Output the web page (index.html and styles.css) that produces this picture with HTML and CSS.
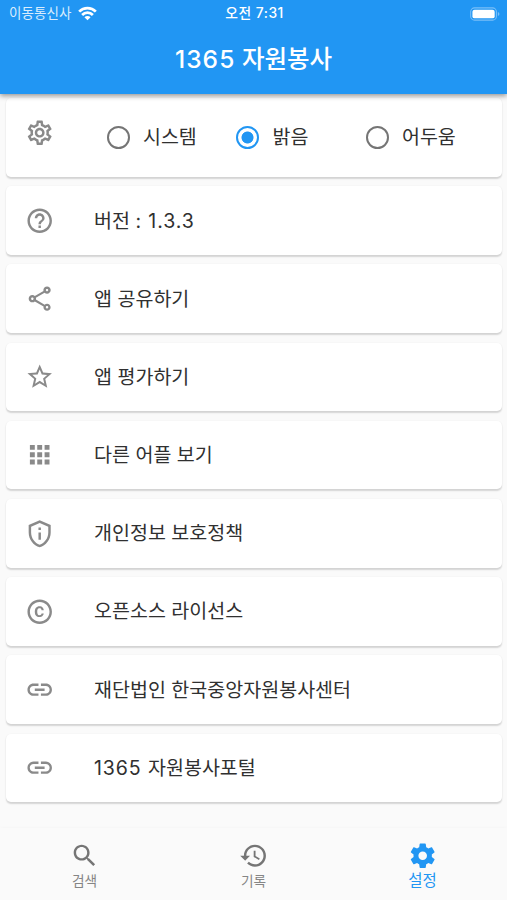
FILE: index.html
```html
<!DOCTYPE html>
<html lang="ko">
<head>
<meta charset="utf-8">
<title>1365 자원봉사</title>
<link rel="stylesheet" href="styles.css">
</head>
<body>
<div class="app">
  <header class="header">
    <div class="status">
      <div class="carrier"><span>이동통신사</span>
        <svg class="wifi" viewBox="0 0 18 14"><path d="M9 13.4 6.1 10.5a4 4 0 0 1 5.8 0z"/><path class="arc" d="M3.9 8.4a7.2 7.2 0 0 1 10.2 0M1.1 5.2a11.2 11.2 0 0 1 15.8 0"/></svg>
      </div>
      <div class="clock">오전 7:31</div>
      <div class="power"><svg class="battery" viewBox="0 0 31 14"><rect class="shell" x=".7" y=".7" width="26.6" height="12.6" rx="4"/><rect x="2.5" y="2.5" width="23" height="9" rx="2.3"/><path class="tip" d="M28.8 5v4q1.6-.6 1.6-2t-1.6-2z"/></svg></div>
    </div>
    <h1 class="title"><span class="num">1365</span> 자원봉사</h1>
  </header>
  <main class="list">
    <section class="card theme">
      <svg class="icon" viewBox="0 0 24 24"><path d="M19.43 12.98c.04-.32.07-.64.07-.98s-.03-.66-.07-.98l2.11-1.65c.19-.15.24-.42.12-.64l-2-3.46c-.09-.16-.26-.25-.44-.25-.06 0-.12.01-.17.03l-2.49 1c-.52-.4-1.08-.73-1.69-.98l-.38-2.65C14.46 2.18 14.25 2 14 2h-4c-.25 0-.46.18-.49.42l-.38 2.65c-.61.25-1.17.59-1.69.98l-2.49-1c-.06-.02-.12-.03-.18-.03-.17 0-.34.09-.43.25l-2 3.46c-.13.22-.07.49.12.64l2.11 1.65c-.04.32-.07.65-.07.98s.03.66.07.98l-2.11 1.65c-.19.15-.24.42-.12.64l2 3.46c.09.16.26.25.44.25.06 0 .12-.01.17-.03l2.49-1c.52.4 1.08.73 1.69.98l.38 2.65c.03.24.24.42.49.42h4c.25 0 .46-.18.49-.42l.38-2.65c.61-.25 1.17-.59 1.69-.98l2.49 1c.06.02.12.03.18.03.17 0 .34-.09.43-.25l2-3.46c.12-.22.07-.49-.12-.64l-2.11-1.65zm-1.98-1.71c.04.31.05.52.05.73s-.02.43-.05.73l-.14 1.13.89.7 1.08.84-.7 1.21-1.27-.51-1.04-.42-.9.68c-.43.32-.84.56-1.25.73l-1.06.43-.16 1.13-.2 1.35h-1.4l-.19-1.35-.16-1.13-1.06-.43c-.43-.18-.83-.41-1.23-.71l-.91-.7-1.06.43-1.27.51-.7-1.21 1.08-.84.89-.7-.14-1.13c-.03-.31-.05-.54-.05-.74s.02-.43.05-.73l.14-1.13-.89-.7-1.08-.84.7-1.21 1.27.51 1.04.42.9-.68c.43-.32.84-.56 1.25-.73l1.06-.43.16-1.13.2-1.35h1.39l.19 1.35.16 1.13 1.06.43c.43.18.83.41 1.23.71l.91.7 1.06-.43 1.27-.51.7 1.21-1.07.85-.89.7.14 1.13zM12 8c-2.21 0-4 1.79-4 4s1.79 4 4 4 4-1.79 4-4-1.79-4-4-4zm0 6c-1.1 0-2-.9-2-2s.9-2 2-2 2 .9 2 2-.9 2-2 2z"/></svg>
      <div class="options">
        <div class="option"><span class="radio"></span><span>시스템</span></div>
        <div class="option"><span class="radio on"></span><span>밝음</span></div>
        <div class="option"><span class="radio"></span><span>어두움</span></div>
      </div>
    </section>
    <section class="card">
      <svg class="icon" viewBox="0 0 24 24"><path d="M11 18h2v-2h-2v2zm1-16C6.48 2 2 6.48 2 12s4.48 10 10 10 10-4.48 10-10S17.52 2 12 2zm0 18c-4.41 0-8-3.59-8-8s3.59-8 8-8 8 3.59 8 8-3.59 8-8 8zm0-14c-2.21 0-4 1.79-4 4h2c0-1.1.9-2 2-2s2 .9 2 2c0 2-3 1.75-3 5h2c0-2.25 3-2.5 3-5 0-2.21-1.79-4-4-4z"/></svg>
      <span class="label">버전 <span class="num">: 1.3.3</span></span>
    </section>
    <section class="card">
      <svg class="icon" viewBox="0 0 24 24"><path d="M18 16.08c-.76 0-1.44.3-1.96.77L8.91 12.7c.05-.23.09-.46.09-.7s-.04-.47-.09-.7l7.05-4.11c.54.5 1.25.81 2.04.81 1.66 0 3-1.34 3-3s-1.34-3-3-3-3 1.34-3 3c0 .24.04.47.09.7L8.04 9.81C7.5 9.31 6.79 9 6 9c-1.66 0-3 1.34-3 3s1.34 3 3 3c.79 0 1.5-.31 2.04-.81l7.12 4.16c-.05.21-.08.43-.08.65 0 1.61 1.31 2.92 2.92 2.92s2.92-1.31 2.92-2.92-1.31-2.92-2.92-2.92zM18 4c.55 0 1 .45 1 1s-.45 1-1 1-1-.45-1-1 .45-1 1-1zM6 13c-.55 0-1-.45-1-1s.45-1 1-1 1 .45 1 1-.45 1-1 1zm12 7.02c-.55 0-1-.45-1-1s.45-1 1-1 1 .45 1 1-.45 1-1 1z"/></svg>
      <span class="label">앱 공유하기</span>
    </section>
    <section class="card">
      <svg class="icon" viewBox="0 0 24 24"><path d="M22 9.24l-7.19-.62L12 2 9.19 8.63 2 9.24l5.46 4.73L5.82 21 12 17.27 18.18 21l-1.63-7.03L22 9.24zM12 15.4l-3.76 2.27 1-4.28-3.32-2.88 4.38-.38L12 6.1l1.71 4.04 4.38.38-3.32 2.88 1 4.28L12 15.4z"/></svg>
      <span class="label">앱 평가하기</span>
    </section>
    <section class="card">
      <svg class="icon" viewBox="0 0 24 24"><path d="M4 8h4V4H4v4zm6 12h4v-4h-4v4zm-6 0h4v-4H4v4zm0-6h4v-4H4v4zm6 0h4v-4h-4v4zm6-10v4h4V4h-4zm-6 4h4V4h-4v4zm6 6h4v-4h-4v4zm0 6h4v-4h-4v4z"/></svg>
      <span class="label">다른 어플 보기</span>
    </section>
    <section class="card">
      <svg class="icon" viewBox="0 0 24 24"><path d="M12 1L3 5v6c0 5.55 3.84 10.74 9 12 5.16-1.26 9-6.45 9-12V5l-9-4zm7 10c0 4.52-2.98 8.69-7 9.93-4.02-1.24-7-5.41-7-9.93V6.3l7-3.11 7 3.11V11zm-8 0h2v6h-2v-6zm0-4h2v2h-2V7z"/></svg>
      <span class="label">개인정보 보호정책</span>
    </section>
    <section class="card">
      <svg class="icon" viewBox="0 0 24 24"><path d="M10.08 10.86c.05-.33.16-.62.3-.87s.34-.46.59-.62c.24-.15.54-.22.91-.23.23.01.44.05.63.13.2.09.38.21.52.36s.25.33.34.53.13.42.14.64h1.79c-.02-.47-.11-.9-.28-1.29s-.4-.73-.7-1.01-.66-.5-1.08-.66-.88-.23-1.39-.23c-.65 0-1.22.11-1.7.34s-.88.53-1.2.92-.56.84-.71 1.36S8 11.29 8 11.87v.27c0 .58.08 1.12.23 1.64s.39.97.71 1.35.72.69 1.2.91c.48.22 1.05.34 1.7.34.47 0 .91-.08 1.32-.23s.77-.36 1.08-.63.56-.58.74-.94.29-.74.3-1.15h-1.79c-.01.21-.06.4-.15.58s-.21.33-.36.46-.32.23-.52.3c-.19.07-.39.09-.6.1-.36-.01-.66-.08-.89-.23-.25-.16-.45-.37-.59-.62s-.25-.55-.3-.88-.08-.67-.08-1v-.27c0-.35.03-.68.08-1.01zM12 2C6.48 2 2 6.48 2 12s4.48 10 10 10 10-4.48 10-10S17.52 2 12 2zm0 18c-4.41 0-8-3.59-8-8s3.59-8 8-8 8 3.59 8 8-3.59 8-8 8z"/></svg>
      <span class="label">오픈소스 라이선스</span>
    </section>
    <section class="card">
      <svg class="icon" viewBox="0 0 24 24"><path d="M3.9 12c0-1.71 1.39-3.1 3.1-3.1h4V7H7c-2.76 0-5 2.24-5 5s2.24 5 5 5h4v-1.9H7c-1.71 0-3.1-1.39-3.1-3.1zM8 13h8v-2H8v2zm9-6h-4v1.9h4c1.71 0 3.1 1.39 3.1 3.1s-1.39 3.1-3.1 3.1h-4V17h4c2.76 0 5-2.24 5-5s-2.24-5-5-5z"/></svg>
      <span class="label">재단법인 한국중앙자원봉사센터</span>
    </section>
    <section class="card">
      <svg class="icon" viewBox="0 0 24 24"><path d="M3.9 12c0-1.71 1.39-3.1 3.1-3.1h4V7H7c-2.76 0-5 2.24-5 5s2.24 5 5 5h4v-1.9H7c-1.71 0-3.1-1.39-3.1-3.1zM8 13h8v-2H8v2zm9-6h-4v1.9h4c1.71 0 3.1 1.39 3.1 3.1s-1.39 3.1-3.1 3.1h-4V17h4c2.76 0 5-2.24 5-5s-2.24-5-5-5z"/></svg>
      <span class="label"><span class="num">1365 </span>자원봉사포털</span>
    </section>
  </main>
  <nav class="tabs">
    <div class="tab">
      <svg class="icon" viewBox="0 0 24 24"><path d="M15.5 14h-.79l-.28-.27C15.41 12.59 16 11.11 16 9.5 16 5.91 13.09 3 9.5 3S3 5.91 3 9.5 5.91 16 9.5 16c1.61 0 3.09-.59 4.23-1.57l.27.28v.79l5 4.99L20.49 19l-4.99-5zm-6 0C7.01 14 5 11.99 5 9.5S7.01 5 9.5 5 14 7.01 14 9.5 11.99 14 9.5 14z"/></svg>
      <span>검색</span>
    </div>
    <div class="tab">
      <svg class="icon" viewBox="0 0 24 24"><path d="M13 3c-4.97 0-9 4.03-9 9H1l3.89 3.89.07.14L9 12H6c0-3.87 3.13-7 7-7s7 3.13 7 7-3.13 7-7 7c-1.93 0-3.68-.79-4.94-2.06l-1.42 1.42C8.27 19.99 10.51 21 13 21c4.97 0 9-4.03 9-9s-4.03-9-9-9zm-1 5v5l4.28 2.54.72-1.21-3.5-2.08V8H12z"/></svg>
      <span>기록</span>
    </div>
    <div class="tab active">
      <svg class="icon" viewBox="0 0 24 24"><path d="M19.43 12.98c.04-.32.07-.64.07-.98s-.03-.66-.07-.98l2.11-1.65c.19-.15.24-.42.12-.64l-2-3.46c-.12-.22-.39-.3-.61-.22l-2.49 1c-.52-.4-1.08-.73-1.69-.98l-.38-2.65C14.46 2.18 14.25 2 14 2h-4c-.25 0-.46.18-.49.42l-.38 2.65c-.61.25-1.17.59-1.69.98l-2.49-1c-.23-.09-.49 0-.61.22l-2 3.46c-.13.22-.07.49.12.64l2.11 1.65c-.04.32-.07.65-.07.98s.03.66.07.98l-2.11 1.65c-.19.15-.24.42-.12.64l2 3.46c.12.22.39.3.61.22l2.49-1c.52.4 1.08.73 1.69.98l.38 2.65c.03.24.24.42.49.42h4c.25 0 .46-.18.49-.42l.38-2.65c.61-.25 1.17-.59 1.69-.98l2.49 1c.23.09.49 0 .61-.22l2-3.46c.12-.22.07-.49-.12-.64l-2.11-1.65zM12 15.5c-1.93 0-3.5-1.57-3.5-3.5s1.57-3.5 3.5-3.5 3.5 1.57 3.5 3.5-1.57 3.5-3.5 3.5z"/></svg>
      <span>설정</span>
    </div>
  </nav>
</div>
</body>
</html>
```
FILE: styles.css
```css
* { box-sizing: border-box; }
body { margin: 0; font-family: Inter, "Noto Sans CJK KR", sans-serif; color: #303030; }
.app { width: 507px; height: 900px; display: flex; flex-direction: column; background: #fafafa; overflow: hidden; }
.header { height: 93.5px; flex: none; background: #2196f3; color: #fff; box-shadow: 0 2px 5px rgba(0,0,0,.4); position: relative; z-index: 1; }
.status { height: 27px; display: grid; grid-template-columns: 1fr auto 1fr; align-items: center; padding: 0 7px 0 9px; font-size: 13.5px; line-height: 27px; }
.carrier { display: flex; align-items: center; gap: 6px; color: #d9edfd; letter-spacing: .1px; }
.wifi { width: 19px; height: 15px; fill: #fff; }
.wifi .arc { fill: none; stroke: #fff; stroke-width: 2.6; }
.clock { font-weight: 500; font-size: 13.8px; letter-spacing: .5px; }
.power { display: flex; justify-content: flex-end; }
.battery { width: 30px; height: 14px; fill: #fff; }
.battery .shell { fill: none; stroke: #7abff8; stroke-width: 1.1; }
.battery .tip { fill: #7abff8; }
.title { margin: 0; height: 64px; line-height: 64px; text-align: center; font-size: 24.5px; font-weight: 500; }
.num { letter-spacing: .9px; }
.title .num { letter-spacing: 1.1px; }
.list { flex: 1; display: flex; flex-direction: column; gap: 9.7px; padding: 4.9px 5px 0 6px; }
.card { height: 68.5px; flex: none; display: flex; align-items: center; padding-left: 19.3px; background: #fff; border-radius: 5px; box-shadow: 0 1.5px 1.5px rgba(0,0,0,.15), 0 0 2px rgba(0,0,0,.03); }
.icon { width: 29.4px; height: 29.4px; flex: none; fill: #8a8a8a; }
.label { margin-left: 39.3px; font-size: 19.55px; line-height: 28px; white-space: nowrap; }
.theme { height: 78.2px; align-items: flex-start; padding-top: 20px; }
.options { display: grid; grid-template-columns: 129.5px 129.5px auto; margin: 5px 0 0 52.3px; }
.option { display: flex; align-items: center; gap: 13px; height: 28px; font-size: 19.5px; line-height: 28px; }
.radio { width: 23px; height: 23px; border: 2.4px solid #757575; border-radius: 50%; }
.radio.on { border-color: #2196f3; background: radial-gradient(circle, #2196f3 0 5.6px, transparent 6.4px); }
.tabs { height: 72px; flex: none; display: grid; grid-template-columns: repeat(3, 1fr); background: #fafafa; box-shadow: 0 -1px 3px rgba(0,0,0,.02); }
.tab { display: flex; flex-direction: column; align-items: center; padding-top: 12.5px; font-size: 13.7px; line-height: 20px; color: #858585; }
.tab .icon { fill: #757575; }
.tab span { margin-top: 1px; }
.tab.active { color: #2196f3; font-size: 15.5px; }
.tab.active .icon { fill: #2196f3; }
```
